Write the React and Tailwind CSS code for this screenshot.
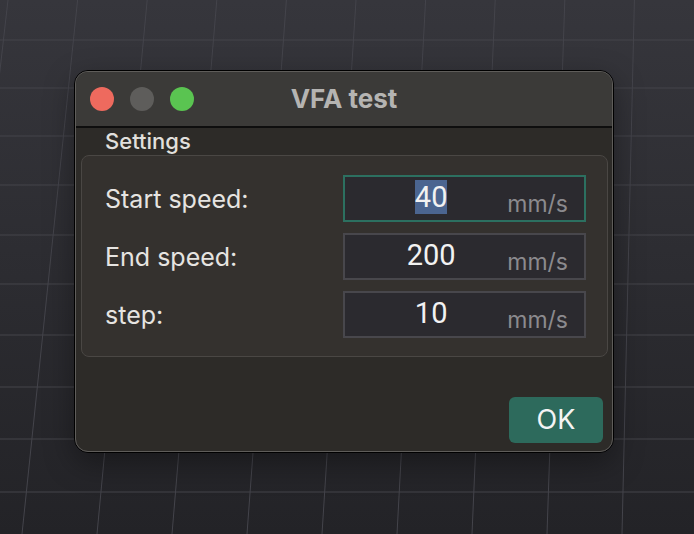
import React from 'react';

const rows = [
  { label: 'Start speed:', value: '40', focused: true },
  { label: 'End speed:', value: '200' },
  { label: 'step:', value: '10' },
];

const hLines = [40, 88, 136, 185, 235, 284, 335, 387, 439, 492];
const vLines = [-1, 0, 1, 2, 3, 4, 5, 6, 7, 8, 9, 10];

function Backdrop() {
  return (
    <svg className="absolute inset-0" width="694" height="534" viewBox="0 0 694 534">
      {hLines.map((y) => (
        <line key={'h' + y} x1="0" y1={y} x2="694" y2={y} stroke="#44444b" strokeWidth="1.2" />
      ))}
      {vLines.map((i) => (
        <line key={'v' + i} x1={8 + 69.6 * i} y1="0" x2={-53 + 75 * i} y2="534" stroke="#44444b" strokeWidth="1" />
      ))}
    </svg>
  );
}

function SpeedInput({ value, focused }) {
  return (
    <div
      className={
        focused
          ? 'flex h-[47px] w-[243px] items-center border-2 border-[#2c7060] bg-[#2b2a2f]'
          : 'flex h-[47px] w-[243px] items-center border-2 border-[#48474c] bg-[#2b2a2f]'
      }
    >
      <div className="-mt-[2px] w-[172px] pl-[10px] text-center font-['Roboto',sans-serif] text-[29px] leading-[31px] text-[#f2f2f2]">
        {focused ? <span className="bg-[#4b6590]">{value}</span> : value}
      </div>
      <div className="mt-[10px] flex-1 pr-[16px] text-right text-[23px] leading-[28px] text-[#8b8a8e]">mm/s</div>
    </div>
  );
}

export default function App() {
  return (
    <div className="relative h-[534px] w-[694px] overflow-hidden bg-gradient-to-b from-[#36363c] to-[#232327] font-['Inter',sans-serif]">
      <Backdrop />
      <div className="relative flex pl-[74px] pt-[70px]">
        <div className="h-[383px] w-[540px] rounded-[14px] border border-black shadow-[0_10px_30px_rgba(0,0,0,0.35)]">
          <div className="flex h-full flex-col overflow-hidden rounded-[13px] border border-[#5f5d5a] bg-[#2d2b28]">
            <div className="grid h-[56px] grid-cols-[1fr_auto_1fr] items-center border-b-2 border-[#0e0e0e] bg-[#3b3a38]">
              <div className="flex items-center gap-[16px] pl-[14px]">
                <span className="h-[24px] w-[24px] rounded-full bg-[#ee6a5e]" />
                <span className="h-[24px] w-[24px] rounded-full bg-[#5e5d5b]" />
                <span className="h-[24px] w-[24px] rounded-full bg-[#5ac451]" />
              </div>
              <div className="text-[26px] font-bold leading-[30px] text-[#b5b4b2]">VFA test</div>
              <div />
            </div>

            <div className="h-[27px] pl-[29px] text-[22px] font-medium leading-[26px] text-[#e2e0dd]">Settings</div>

            <div className="ml-[5px] mr-[4px] flex h-[202px] flex-col gap-[11px] rounded-[8px] border border-[#4a4744] bg-[#34312e] pl-[23px] pr-[21px] pt-[19px]">
              {rows.map((r) => (
                <div key={r.label} className="flex h-[47px] items-center">
                  <div className="w-[238px] text-[25px] leading-[30px] text-[#e6e4e1]">{r.label}</div>
                  <SpeedInput value={r.value} focused={r.focused} />
                </div>
              ))}
            </div>

            <div className="mt-[40px] flex justify-end pr-[9px]">
              <button className="h-[46px] w-[94px] rounded-[6px] bg-[#2d6a5c] text-[27px] leading-[46px] text-[#f4f4f4]">
                OK
              </button>
            </div>
          </div>
        </div>
      </div>
    </div>
  );
}
